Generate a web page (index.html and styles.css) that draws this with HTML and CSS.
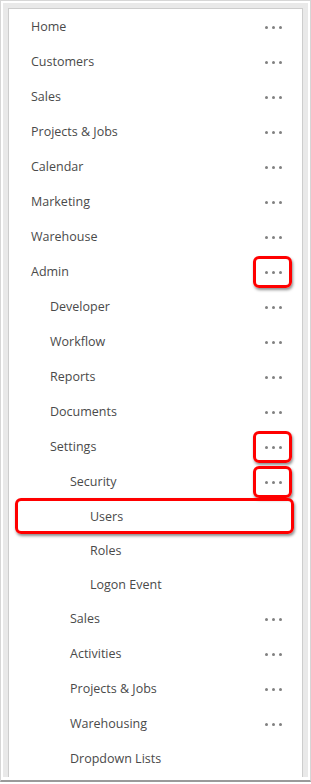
FILE: index.html
```html
<!DOCTYPE html>
<html>
<head>
<meta charset="utf-8">
<link rel="stylesheet" href="styles.css">
</head>
<body>
<div class="frame">
  <div class="band">
    <nav class="list">
      <div class="row l0"><span class="label">Home</span><span class="dots"><i></i><i></i><i></i></span></div>
      <div class="row l0"><span class="label">Customers</span><span class="dots"><i></i><i></i><i></i></span></div>
      <div class="row l0"><span class="label">Sales</span><span class="dots"><i></i><i></i><i></i></span></div>
      <div class="row l0"><span class="label">Projects &amp; Jobs</span><span class="dots"><i></i><i></i><i></i></span></div>
      <div class="row l0"><span class="label">Calendar</span><span class="dots"><i></i><i></i><i></i></span></div>
      <div class="row l0"><span class="label">Marketing</span><span class="dots"><i></i><i></i><i></i></span></div>
      <div class="row l0"><span class="label">Warehouse</span><span class="dots"><i></i><i></i><i></i></span></div>
      <div class="row l0"><span class="label">Admin</span><span class="dots hl"><i></i><i></i><i></i></span></div>
      <div class="row l1"><span class="label">Developer</span><span class="dots"><i></i><i></i><i></i></span></div>
      <div class="row l1"><span class="label">Workflow</span><span class="dots"><i></i><i></i><i></i></span></div>
      <div class="row l1"><span class="label">Reports</span><span class="dots"><i></i><i></i><i></i></span></div>
      <div class="row l1"><span class="label">Documents</span><span class="dots"><i></i><i></i><i></i></span></div>
      <div class="row l1"><span class="label">Settings</span><span class="dots hl"><i></i><i></i><i></i></span></div>
      <div class="row l2"><span class="label">Security</span><span class="dots hl"><i></i><i></i><i></i></span></div>
      <div class="row l3 leaf hlrow"><span class="label">Users</span></div>
      <div class="row l3 leaf"><span class="label">Roles</span></div>
      <div class="row l3 leaf"><span class="label">Logon Event</span></div>
      <div class="row l2"><span class="label">Sales</span><span class="dots"><i></i><i></i><i></i></span></div>
      <div class="row l2"><span class="label">Activities</span><span class="dots"><i></i><i></i><i></i></span></div>
      <div class="row l2"><span class="label">Projects &amp; Jobs</span><span class="dots"><i></i><i></i><i></i></span></div>
      <div class="row l2"><span class="label">Warehousing</span><span class="dots"><i></i><i></i><i></i></span></div>
      <div class="row l2 leaf"><span class="label">Dropdown Lists</span></div>
    </nav>
  </div>
</div>
</body>
</html>
```
FILE: styles.css
```css
html, body {
  margin: 0;
  padding: 0;
  background: #ffffff;
}

.frame {
  box-sizing: border-box;
  width: 311px;
  height: 782px;
  border: 1px solid #d6d6d6;
  border-bottom: 2px solid #9a9a9a;
  padding: 2px 2px 3px 2px;
  background: #ffffff;
  box-shadow: 0 1px 1px rgba(0, 0, 0, 0.15);
}

.band {
  box-sizing: border-box;
  height: 100%;
  border: 5px solid #e9e9e9;
  border-bottom: none;
}

.list {
  box-sizing: border-box;
  height: 100%;
  border: 1px solid #cdcdcd;
  border-bottom: none;
  overflow: hidden;
  background: #ffffff;
  font-family: "Open Sans", "Noto Sans", sans-serif;
  font-size: 12.5px;
  color: #4a4a4a;
}

.row {
  position: relative;
  display: flex;
  align-items: center;
  justify-content: space-between;
  height: 35px;
  padding-right: 20px;
}

.row.leaf {
  height: 34px;
}

.l0 { padding-left: 22px; }
.l1 { padding-left: 41px; }
.l2 { padding-left: 61px; }
.l3 { padding-left: 81px; }

.label {
  white-space: nowrap;
}

.dots {
  position: relative;
  display: flex;
  gap: 4px;
  align-items: center;
  padding-top: 1px;
}

.dots i {
  display: block;
  width: 3px;
  height: 3px;
  border-radius: 50%;
  background: #808080;
}

.dots.hl::after {
  content: "";
  position: absolute;
  left: -12px;
  right: -10px;
  top: -14px;
  bottom: -14px;
  border: 3px solid #ff0000;
  border-radius: 6px;
  box-shadow: 1px 2px 3px rgba(0, 0, 0, 0.45);
}

.hlrow::after {
  content: "";
  position: absolute;
  left: 6px;
  right: 8px;
  top: -1px;
  bottom: -1px;
  border: 3px solid #ff0000;
  border-radius: 6px;
  box-shadow: 1px 2px 3px rgba(0, 0, 0, 0.45);
}
```
